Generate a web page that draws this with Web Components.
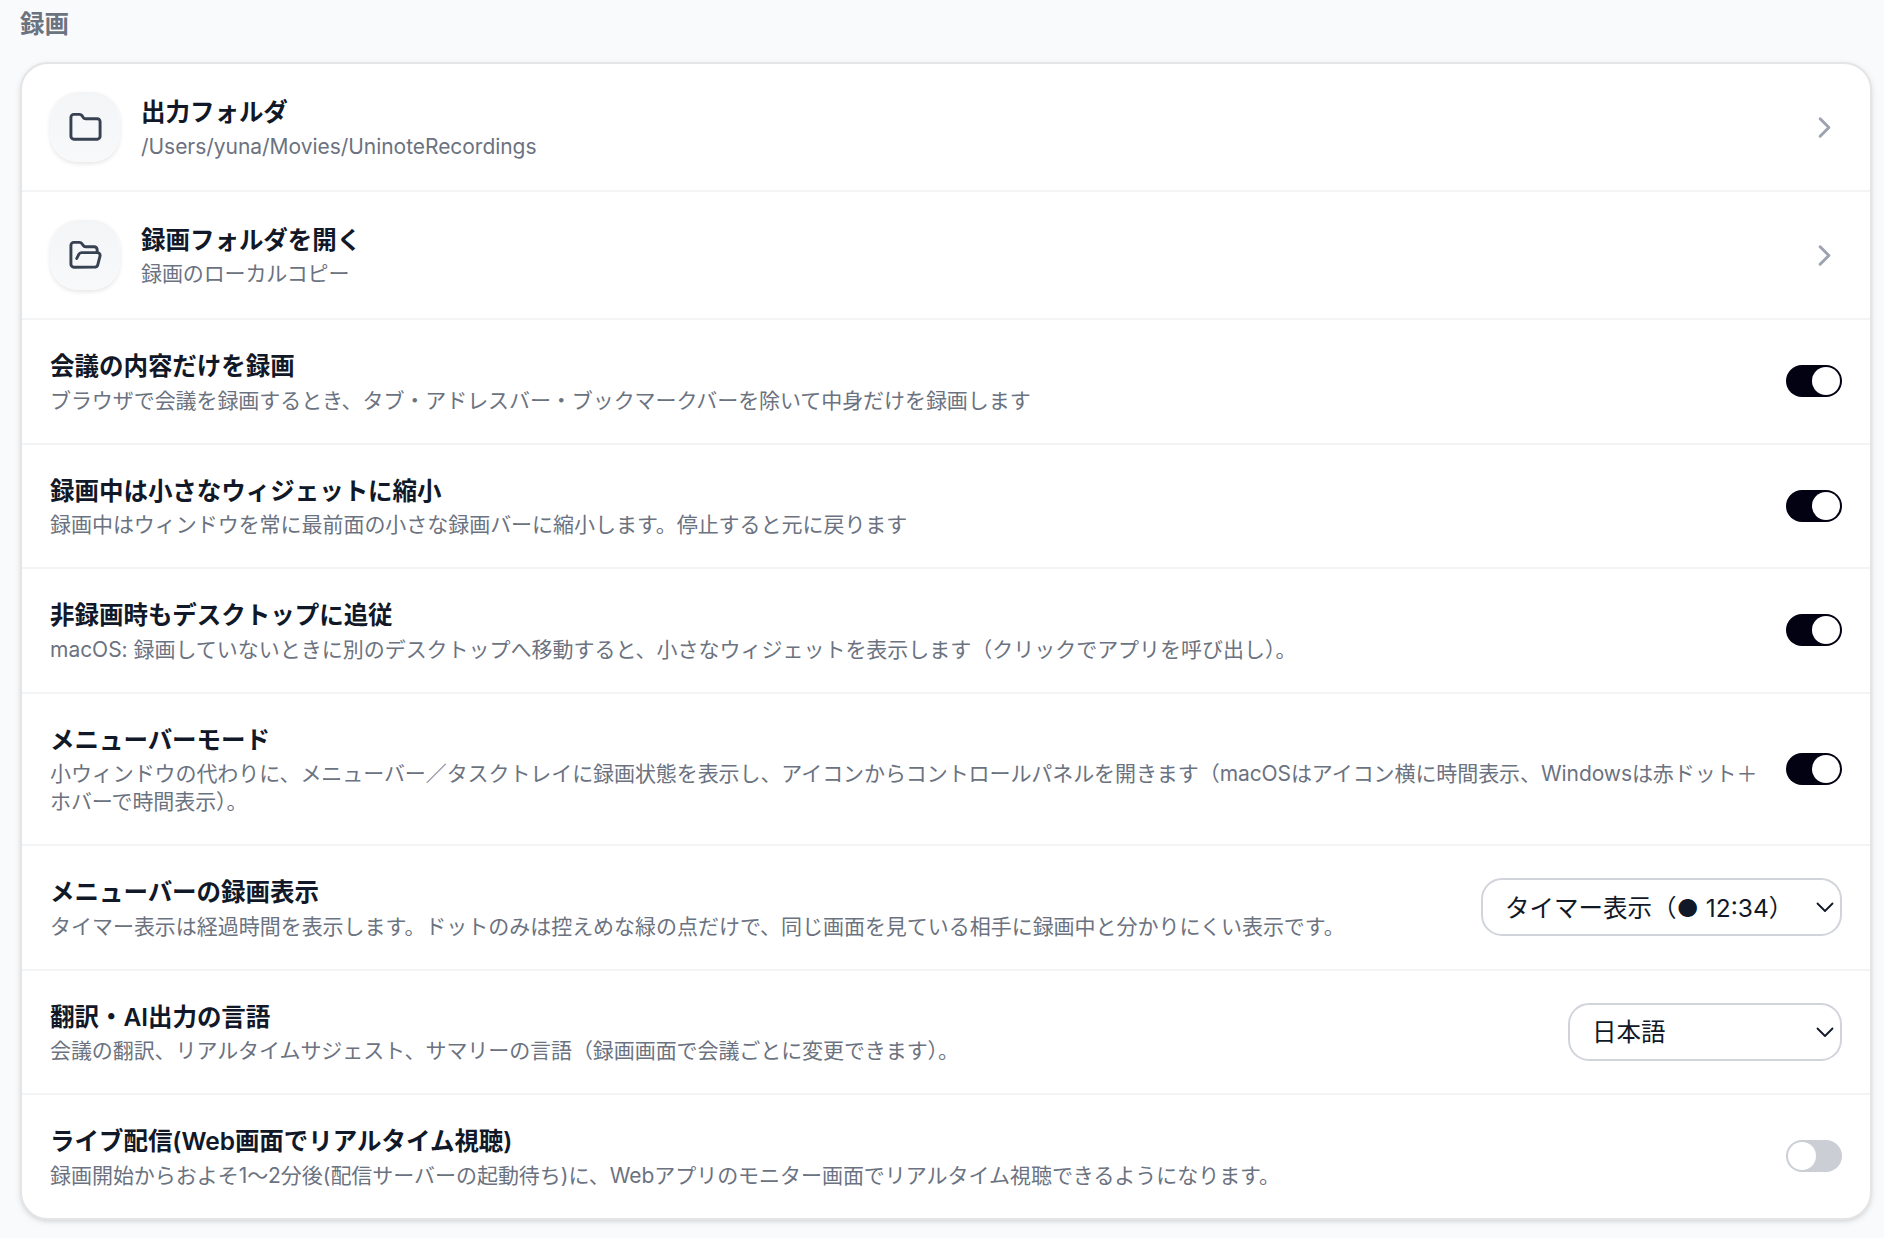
<!DOCTYPE html>
<html lang="ja">
<head>
<meta charset="utf-8">
<title>録画</title>
<style>
	html {
		font-size: 28px;
	}

	body {
		margin: 0;
		padding: 6.5px 12px 18px 20px;
		background: #f9fafc;
		color: #111827;
		font-family: Inter, "Noto Sans CJK JP", sans-serif;
	}
</style>
</head>
<body>

<template id="settings-section-template">
	<style>
		:host {
			display: flex;
			flex-direction: column;
			gap: 20.5px;
		}

		h2 {
			margin: 0;
			font-size: .875rem;
			line-height: 1.25rem;
			font-weight: 600;
			color: #6b7280;
		}

		.card {
			background: #fff;
			border: 2px solid #e5e5e6;
			border-radius: 1rem;
			box-shadow: 0 2px 6px rgba(0, 0, 0, .1), 0 2px 4px -2px rgba(0, 0, 0, .1);
		}
	</style>
	<h2></h2>
	<div class="card"><slot></slot></div>
</template>

<template id="settings-row-template">
	<style>
		:host {
			display: flex;
			align-items: center;
			gap: 1rem;
			padding: 1rem;
			border-bottom: 2px solid #f3f4f5;
		}

		:host(:last-child) {
			border-bottom: 0;
		}

		.main {
			flex: 1;
			min-width: 0;
			display: flex;
			align-items: center;
			gap: .75rem;
		}

		.text {
			flex: 1;
			min-width: 0;
			display: flex;
			flex-direction: column;
			gap: .125rem;
		}

		.title {
			margin-bottom: -2px;
			font-size: .875rem;
			line-height: 37px;
			font-weight: 600;
			letter-spacing: -.03px;
		}

		.description {
			padding-top: var(--description-shift, 0);
			margin-bottom: calc(var(--description-shift, 0px) * -1);
			font-size: .75rem;
			line-height: 1rem;
			letter-spacing: var(--description-tracking, 0);
			color: #6b7280;
		}
	</style>
	<div class="main">
		<slot name="icon"></slot>
		<div class="text">
			<div class="title"></div>
			<div class="description"><slot></slot></div>
		</div>
	</div>
	<slot name="control"></slot>
</template>

<template id="icon-tile-template">
	<style>
		:host {
			display: flex;
			align-items: center;
			justify-content: center;
			flex: none;
			width: 2.5rem;
			height: 2.5rem;
			border-radius: 1rem;
			background: linear-gradient(to bottom, #f4f5f7, #f8f9fb);
			box-shadow: 0 2px 4px rgba(0, 0, 0, .1);
			color: #374151;
		}

		svg {
			width: 1.25rem;
			height: 1.25rem;
		}
	</style>
	<svg viewBox="0 0 24 24" fill="none" stroke="currentColor" stroke-width="2" stroke-linecap="round" stroke-linejoin="round"><path></path></svg>
</template>

<template id="row-chevron-template">
	<style>
		:host {
			display: flex;
			flex: none;
			color: #9ca3af;
		}

		svg {
			width: 1.25rem;
			height: 1.25rem;
		}
	</style>
	<svg viewBox="0 0 24 24" fill="none" stroke="currentColor" stroke-width="2" stroke-linecap="round" stroke-linejoin="round"><path d="m9 18 6-6-6-6"></path></svg>
</template>

<template id="toggle-switch-template">
	<style>
		:host {
			display: flex;
			flex: none;
			box-sizing: border-box;
			width: 56px;
			height: 32px;
			padding: 2px;
			border-radius: 16px;
			background: #cbced4;
		}

		:host([checked]) {
			justify-content: flex-end;
			background: #030213;
		}

		.thumb {
			width: 28px;
			height: 28px;
			border-radius: 50%;
			background: #fff;
		}
	</style>
	<div class="thumb"></div>
</template>

<template id="select-box-template">
	<style>
		:host {
			display: flex;
			align-items: center;
			justify-content: space-between;
			flex: none;
			box-sizing: border-box;
			height: 58px;
			padding: 1px 6px 0 22px;
			border: 2px solid #d1d5db;
			border-radius: .75rem;
			background: #fff;
			font-size: .875rem;
			line-height: 1.25rem;
			white-space: nowrap;
		}

		span {
			padding-top: 1px;
		}

		svg {
			width: 18px;
			height: 11px;
		}
	</style>
	<span><slot></slot></span>
	<svg viewBox="0 0 18 11" fill="none" stroke="currentColor" stroke-width="1.8" stroke-linecap="round" stroke-linejoin="round"><path d="M1.5 1.5 9 9l7.5-7.5"></path></svg>
</template>

<settings-section heading="録画">
	<settings-row heading="出力フォルダ" style="--description-tracking: -.04px; --description-shift: 1px">
		<icon-tile slot="icon" icon="folder"></icon-tile>
		/Users/yuna/Movies/UninoteRecordings
		<row-chevron slot="control"></row-chevron>
	</settings-row>
	<settings-row heading="録画フォルダを開く" style="--description-tracking: -.12px">
		<icon-tile slot="icon" icon="folder-open"></icon-tile>
		録画のローカルコピー
		<row-chevron slot="control"></row-chevron>
	</settings-row>
	<settings-row heading="会議の内容だけを録画" style="--description-tracking: -.07px">
		ブラウザで会議を録画するとき、タブ・アドレスバー・ブックマークバーを除いて中身だけを録画します
		<toggle-switch slot="control" checked></toggle-switch>
	</settings-row>
	<settings-row heading="録画中は小さなウィジェットに縮小" style="--description-tracking: -.04px">
		録画中はウィンドウを常に最前面の小さな録画バーに縮小します。停止すると元に戻ります
		<toggle-switch slot="control" checked></toggle-switch>
	</settings-row>
	<settings-row heading="非録画時もデスクトップに追従" style="--description-tracking: -.02px">
		macOS: 録画していないときに別のデスクトップへ移動すると、小さなウィジェットを表示します（クリックでアプリを呼び出し）。
		<toggle-switch slot="control" checked></toggle-switch>
	</settings-row>
	<settings-row heading="メニューバーモード" style="--description-tracking: -.08px">
		小ウィンドウの代わりに、メニューバー／タスクトレイに録画状態を表示し、アイコンからコントロールパネルを開きます（macOSはアイコン横に時間表示、Windowsは赤ドット＋ホバーで時間表示）。
		<toggle-switch slot="control" checked></toggle-switch>
	</settings-row>
	<settings-row heading="メニューバーの録画表示" style="--description-tracking: -.03px">
		タイマー表示は経過時間を表示します。ドットのみは控えめな緑の点だけで、同じ画面を見ている相手に録画中と分かりにくい表示です。
		<select-box slot="control" style="width: 361px">タイマー表示（● 12:34）</select-box>
	</settings-row>
	<settings-row heading="翻訳・AI出力の言語" style="--description-tracking: -.08px">
		会議の翻訳、リアルタイムサジェスト、サマリーの言語（録画画面で会議ごとに変更できます）。
		<select-box slot="control" style="width: 274px">日本語</select-box>
	</settings-row>
	<settings-row heading="ライブ配信(Web画面でリアルタイム視聴)" style="--description-tracking: -.04px">
		録画開始からおよそ1〜2分後(配信サーバーの起動待ち)に、Webアプリのモニター画面でリアルタイム視聴できるようになります。
		<toggle-switch slot="control"></toggle-switch>
	</settings-row>
</settings-section>

<script>
	const ICONS = {
		'folder': 'M20 20a2 2 0 0 0 2-2V8a2 2 0 0 0-2-2h-7.9a2 2 0 0 1-1.69-.9L9.6 3.9A2 2 0 0 0 7.93 3H4a2 2 0 0 0-2 2v13a2 2 0 0 0 2 2Z',
		'folder-open': 'm6 14 1.5-2.9A2 2 0 0 1 9.24 10H20a2 2 0 0 1 1.94 2.5l-1.54 6a2 2 0 0 1-1.95 1.5H4a2 2 0 0 1-2-2V5a2 2 0 0 1 2-2h3.9a2 2 0 0 1 1.69.9l.81 1.2a2 2 0 0 0 1.67.9H18a2 2 0 0 1 2 2v2'
	};

	// Clones the template with the given id into an open shadow root.
	class TemplateElement extends HTMLElement {
		constructor() {
			super();
			const template = document.querySelector('#' + this.localName + '-template');
			this.attachShadow({mode: 'open'}).appendChild(template.content.cloneNode(true));
		}
	}

	class SettingsSection extends TemplateElement {
		connectedCallback() {
			this.shadowRoot.querySelector('h2').textContent = this.getAttribute('heading');
		}
	}

	class SettingsRow extends TemplateElement {
		connectedCallback() {
			this.shadowRoot.querySelector('.title').textContent = this.getAttribute('heading');
		}
	}

	class IconTile extends TemplateElement {
		connectedCallback() {
			this.shadowRoot.querySelector('path').setAttribute('d', ICONS[this.getAttribute('icon')]);
		}
	}

	class RowChevron extends TemplateElement {}

	class ToggleSwitch extends TemplateElement {
		connectedCallback() {
			this.setAttribute('role', 'switch');
			this.setAttribute('aria-checked', this.hasAttribute('checked'));
		}
	}

	class SelectBox extends TemplateElement {}

	customElements.define('settings-section', SettingsSection);
	customElements.define('settings-row', SettingsRow);
	customElements.define('icon-tile', IconTile);
	customElements.define('row-chevron', RowChevron);
	customElements.define('toggle-switch', ToggleSwitch);
	customElements.define('select-box', SelectBox);
</script>
</body>
</html>
